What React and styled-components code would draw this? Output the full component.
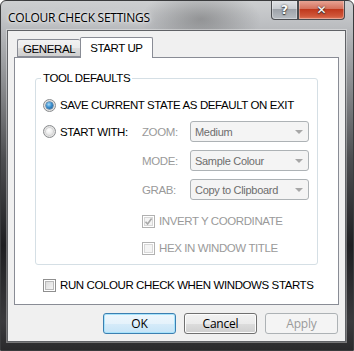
import React from "react";
import styled, { createGlobalStyle } from "styled-components";

const Global = createGlobalStyle`
  html, body { margin: 0; padding: 0; background: #ffffff; }
  body { width: 354px; height: 351px; overflow: hidden; font-family: "Liberation Sans", Arial, sans-serif; }
`;

const Window = styled.div`
  width: 354px;
  height: 351px;
  box-sizing: border-box;
  border: 1px solid #3a3b3d;
  border-radius: 6px 6px 0 0;
  display: flex;
  flex-direction: column;
  background:
    radial-gradient(ellipse 60px 30px at 200px 18px, rgba(60,60,60,0.35), rgba(60,60,60,0)),
    linear-gradient(180deg, #cdcfd1 0%, #bcbec1 7%, #9c9ea1 18%, #4d4e51 45%, #1f1f22 70%, #3a3a3d 92%, #2a2a2c 100%);
  overflow: hidden;
`;

const TitleBar = styled.div`
  height: 29px;
  display: flex;
  align-items: flex-start;
  justify-content: space-between;
  padding-left: 7px;
`;

const TitleText = styled.div`
  margin-top: 8px;
  font-family: "Open Sans", "Noto Sans", sans-serif;
  font-size: 12px;
  letter-spacing: -0.25px;
  color: #000;
  text-shadow: 0 0 6px rgba(255,255,255,0.9), 0 0 3px rgba(255,255,255,0.9);
`;

const CaptionButtons = styled.div`
  display: flex;
  margin-right: 8px;
  margin-top: -1px;
`;

const CaptionButton = styled.div`
  height: 20px;
  width: ${p => p.$w}px;
  box-sizing: border-box;
  border: 1px solid #4a4c50;
  border-top: none;
  border-radius: ${p => p.$r};
  display: flex;
  align-items: center;
  justify-content: center;
  font-family: "DejaVu Sans", sans-serif;
  font-weight: bold;
  font-size: ${p => p.$fs}px;
  color: #ffffff;
  text-shadow: 0 0 2px #333, 0 1px 1px #333;
  background: ${p => p.$bg};
  box-shadow: inset 0 0 0 1px rgba(255,255,255,0.35);
`;

const Client = styled.div`
  flex: 1;
  margin: 0 7px 8px 6px;
  background: #f0f0f0;
  border: 1px solid #606266;
  box-shadow: 0 0 0 1px rgba(255,255,255,0.35);
  display: flex;
  flex-direction: column;
  padding: 6px 6px 0 6px;
`;

const TabStrip = styled.div`
  display: flex;
  align-items: flex-end;
  padding-left: 3px;
  height: 21px;
  position: relative;
  z-index: 1;
  margin-bottom: -1px;
`;

const Tab = styled.div`
  box-sizing: border-box;
  height: ${p => (p.$active ? 21 : 18)}px;
  padding: 0 ${p => (p.$active ? 9 : 5)}px;
  margin-bottom: ${p => (p.$active ? 0 : 1)}px;
  border: 1px solid #898c95;
  border-bottom: ${p => (p.$active ? "none" : "1px solid #898c95")};
  border-right: ${p => (p.$active ? "1px solid #898c95" : "none")};
  border-radius: 2px 2px 0 0;
  background: ${p => (p.$active ? "#ffffff" : "linear-gradient(180deg, #f2f2f2 0%, #ebebeb 50%, #dddddd 51%, #cfcfcf 100%)")};
  font-family: "Liberation Sans", Arial, sans-serif;
  font-size: 11.5px;
  letter-spacing: -0.4px;
  display: flex;
  align-items: center;
  padding-top: ${p => (p.$active ? 0 : 2)}px;
  color: #000;
  margin-left: ${p => (p.$active ? 0 : 0)}px;
`;

const TabPanel = styled.div`
  width: 325px;
  height: 248px;
  box-sizing: border-box;
  background: #ffffff;
  border: 1px solid #898c95;
  padding: 20px 20px 0 20px;
  display: flex;
  flex-direction: column;
`;

const Group = styled.div`
  position: relative;
  height: 187px;
  box-sizing: border-box;
  border: 1px solid #d5dfe5;
  border-radius: 3px;
  padding: 18px 0 0 7px;
  display: flex;
  flex-direction: column;
`;

const Legend = styled.span`
  position: absolute;
  top: -8px;
  left: 5px;
  padding: 0 2px;
  background: #ffffff;
  font-size: 11.5px;
  letter-spacing: -0.4px;
  line-height: 15px;
  color: #000;
`;

const Label = styled.span`
  font-size: 11.5px;
  letter-spacing: -0.4px;
  line-height: 16px;
  color: ${p => (p.$disabled ? "#9a9a9a" : "#000")};
  white-space: nowrap;
`;

const OptionRow = styled.div`
  display: flex;
  align-items: center;
  gap: 4px;
  height: 16px;
  margin-left: ${p => p.$indent || 0}px;
  margin-top: ${p => p.$mt || 0}px;
`;

const Radio = styled.span`
  width: 13px;
  height: 13px;
  box-sizing: border-box;
  border-radius: 50%;
  border: 1px solid #8a8c8e;
  background: radial-gradient(circle at 50% 50%, #f4f4f4 0%, #e6e6e6 60%, #cfcfcf 100%);
  display: flex;
  align-items: center;
  justify-content: center;
  flex-shrink: 0;
  &::after {
    content: "";
    width: 7px;
    height: 7px;
    border-radius: 50%;
    background: ${p => (p.$checked
      ? "radial-gradient(circle at 40% 35%, #a9dbf7 0%, #3a8fcf 45%, #14508a 100%)"
      : "radial-gradient(circle at 40% 35%, #ffffff 0%, #eeeeee 50%, #d6d6d6 100%)")};
    box-shadow: ${p => (p.$checked ? "0 0 0 0.5px #1d4f7a" : "0 0 0 0.5px #bcbcbc")};
  }
`;

const Check = styled.span`
  width: 13px;
  height: 13px;
  box-sizing: border-box;
  border: 1px solid ${p => (p.$disabled ? "#b1b1b1" : "#8f8f8f")};
  background: #ffffff;
  padding: 1px;
  flex-shrink: 0;
  display: flex;
  position: relative;
  & > i {
    flex: 1;
    border: 1px solid ${p => (p.$disabled ? "#d8d8d8" : "#b9b9b9")};
    background: ${p => (p.$disabled ? "#f4f4f4" : "linear-gradient(135deg, #dcdcdc 0%, #f4f4f4 100%)")};
  }
  & > svg {
    position: absolute;
    left: 1px;
    top: 1px;
  }
`;

const Grid = styled.div`
  display: grid;
  grid-template-columns: 99px 48px 119px;
  grid-auto-rows: 21px;
  row-gap: 8px;
  margin-top: 8px;
  align-items: center;
`;

const Select = styled.div`
  height: 21px;
  box-sizing: border-box;
  border: 1px solid #adb2b5;
  border-radius: 3px;
  background: #f4f4f4;
  display: flex;
  align-items: center;
  justify-content: space-between;
  padding: 0 5px 0 4px;
  font-size: 11px;
  letter-spacing: -0.3px;
  color: #6d6d6d;
  &::after {
    content: "";
    border-left: 4px solid transparent;
    border-right: 4px solid transparent;
    border-top: 4px solid #a7a7a7;
  }
`;

const Footer = styled.div`
  display: flex;
  justify-content: flex-end;
  gap: 8px;
  padding: 8px 0 0 0;
  margin-right: 1px;
`;

const Button = styled.div`
  width: 73px;
  height: 21px;
  box-sizing: border-box;
  border-radius: 3px;
  display: flex;
  align-items: center;
  justify-content: center;
  font-family: "Open Sans", "Noto Sans", sans-serif;
  font-size: 12px;
  letter-spacing: -0.2px;
  color: ${p => (p.$variant === "disabled" ? "#9a9a9a" : "#000")};
  border: 1px solid ${p => (p.$variant === "default" ? "#3c7fb1" : p.$variant === "disabled" ? "#adb2b5" : "#707070")};
  background: ${p => (p.$variant === "disabled"
    ? "#f4f4f4"
    : p.$variant === "default"
    ? "linear-gradient(180deg, #eef7fd 0%, #e5f2fb 50%, #d6ebf9 51%, #c6e4f7 100%)"
    : "linear-gradient(180deg, #f2f2f2 0%, #ebebeb 50%, #dddddd 51%, #cfcfcf 100%)")};
  box-shadow: ${p => (p.$variant === "disabled" ? "none" : p.$variant === "default" ? "inset 0 0 0 1px #a8e3fb" : "inset 0 0 0 1px #fcfcfc")};
`;

function Tick() {
  return (
    <svg width="9" height="9" viewBox="0 0 9 9">
      <path d="M1.5 4.8 L3.6 7 L7.6 1.5" fill="none" stroke="#a8a8a8" strokeWidth="1.6" />
    </svg>
  );
}

export default function App() {
  return (
    <>
      <Global />
      <Window>
        <TitleBar>
          <TitleText>COLOUR CHECK SETTINGS</TitleText>
          <CaptionButtons>
            <CaptionButton $w={27} $fs={12} $r="0 0 0 4px" $bg="linear-gradient(180deg, #e3e5e8 0%, #c8ccd1 45%, #9ea3aa 50%, #b7bcc2 100%)">?</CaptionButton>
            <CaptionButton $w={47} $fs={12} $r="0 0 4px 0" $bg="linear-gradient(180deg, #e9a99a 0%, #d5735e 45%, #c0391d 50%, #d0573a 85%, #e07a5c 100%)">✕</CaptionButton>
          </CaptionButtons>
        </TitleBar>
        <Client>
          <TabStrip>
            <Tab>GENERAL</Tab>
            <Tab $active>START UP</Tab>
          </TabStrip>
          <TabPanel>
            <Group>
              <Legend>TOOL DEFAULTS</Legend>
              <OptionRow>
                <Radio $checked />
                <Label>SAVE CURRENT STATE AS DEFAULT ON EXIT</Label>
              </OptionRow>
              <Grid>
                <OptionRow>
                  <Radio />
                  <Label>START WITH:</Label>
                </OptionRow>
                <Label $disabled>ZOOM:</Label>
                <Select>Medium</Select>
                <span />
                <Label $disabled>MODE:</Label>
                <Select>Sample Colour</Select>
                <span />
                <Label $disabled>GRAB:</Label>
                <Select>Copy to Clipboard</Select>
              </Grid>
              <OptionRow $indent={99} $mt={13}>
                <Check $disabled><i /><Tick /></Check>
                <Label $disabled>INVERT Y COORDINATE</Label>
              </OptionRow>
              <OptionRow $indent={99} $mt={11}>
                <Check $disabled><i /></Check>
                <Label $disabled>HEX IN WINDOW TITLE</Label>
              </OptionRow>
            </Group>
            <OptionRow $indent={8} $mt={12}>
              <Check><i /></Check>
              <Label>RUN COLOUR CHECK WHEN WINDOWS STARTS</Label>
            </OptionRow>
          </TabPanel>
          <Footer>
            <Button $variant="default">OK</Button>
            <Button>Cancel</Button>
            <Button $variant="disabled">Apply</Button>
          </Footer>
        </Client>
      </Window>
    </>
  );
}
